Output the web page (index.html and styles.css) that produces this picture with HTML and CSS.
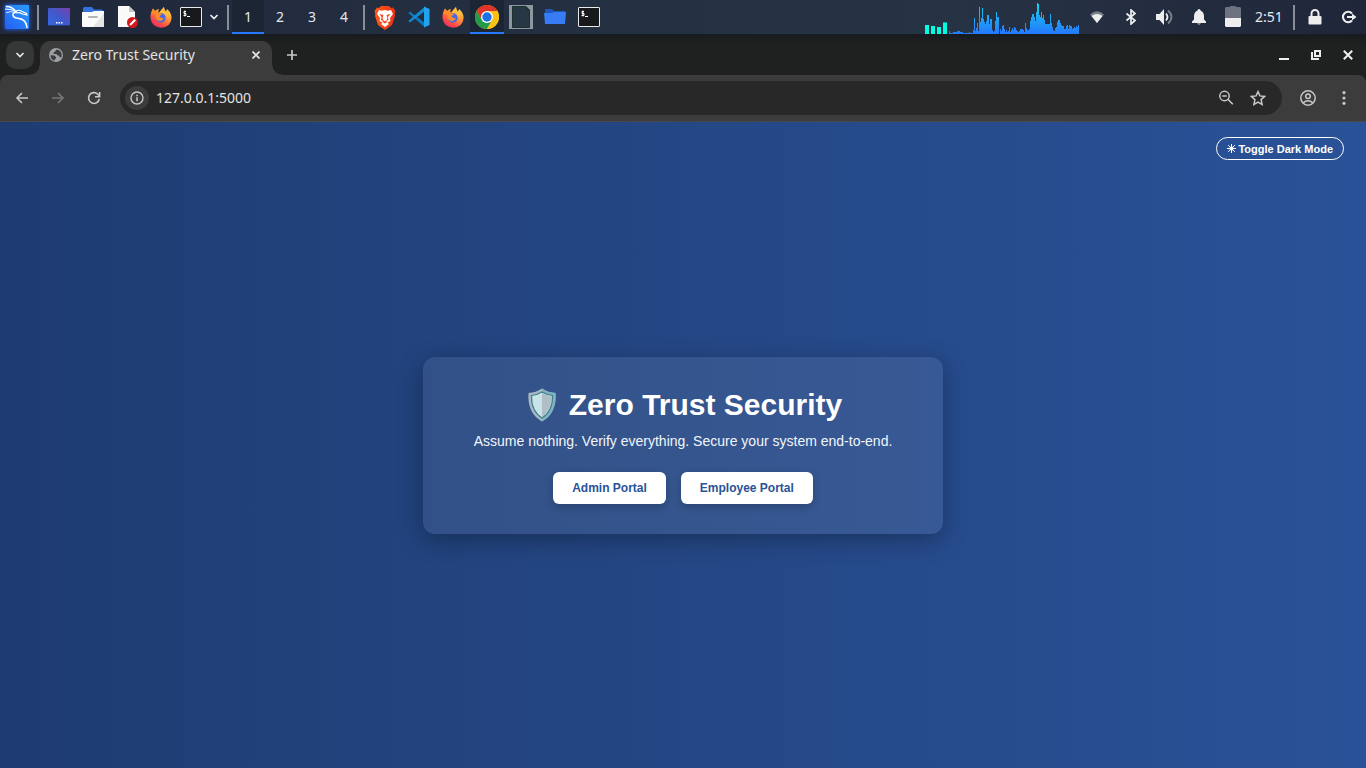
FILE: index.html
```html
<!DOCTYPE html>
<html lang="en">
<head>
<meta charset="utf-8">
<meta name="viewport" content="width=device-width, initial-scale=1">
<title>Zero Trust Security</title>
<link rel="stylesheet" href="styles.css">
</head>
<body>
<header class="panel">
  <button class="cell" aria-label="Applications">
    <svg class="kali" width="34" height="34" viewBox="0 0 34 34">
      <defs><linearGradient id="kg" x1="0" y1="1" x2="1" y2="0"><stop offset="0" stop-color="#2360f2"/><stop offset="1" stop-color="#2a9bff"/></linearGradient></defs>
      <rect x="5" y="5" width="24" height="24" rx="1" fill="url(#kg)"/>
      <g fill="none" stroke="#fff" stroke-linecap="round">
        <path d="M6.500 6.500Q12 6.500 16 11.500" stroke-width="1.300"/>
        <path d="M5.500 9Q11 8.500 16.500 12" stroke-width="1"/>
        <path d="M6.500 12.500Q11 10.500 15.500 12.500" stroke-width=".8"/>
        <path d="M15.500 11.500Q19 9 22 11.500L26.500 13.500L27 15L22.500 14Q19 12 17 13" stroke-width="1.200"/>
        <path d="M16.500 12C11 13 12 17.500 18 18.300C23.500 19 26.500 21.500 27 27.500" stroke-width="1.500"/>
        <path d="M20.500 18.700C24.500 20 25.500 22 26.500 25" stroke-width="1"/>
      </g>
    </svg>
  </button>
  <span class="sep"></span>
  <button class="cell" aria-label="Show desktop">
    <svg width="22" height="18" viewBox="0 0 22 18"><defs><linearGradient id="dg" x1="0" y1="1" x2="1" y2="0"><stop offset="0" stop-color="#3568df"/><stop offset=".5" stop-color="#4159cc"/><stop offset="1" stop-color="#7a3fae"/></linearGradient></defs><rect width="22" height="17" rx="1" fill="url(#dg)"/><path d="M0 17h22v1H0z" fill="#253c7c"/><path d="M8 14h1.500v1.500H8zM10.500 14H12v1.500h-1.500zM13 14h1.500v1.500H13z" fill="#fff"/></svg>
  </button>
  <button class="cell" aria-label="Files">
    <svg width="22" height="20" viewBox="0 0 22 20"><path d="M1 7V1.500Q1 0 2.500 0H10l2 2.500h7.500Q21 2.500 21 4v3z" fill="#3373df"/><path d="M0 5h10l2-1h10v15q0 1-1 1H1q-1 0-1-1z" fill="#fbfbfb"/><path d="M22 6v13q0 1-1 1H11z" fill="#e5e5e5"/><rect x="6" y="9" width="10" height="2" rx="1" fill="#b5b5b5"/></svg>
  </button>
  <button class="cell" aria-label="Text editor">
    <svg width="22" height="24" viewBox="0 0 22 24"><path d="M2 1h11l6 6v15H2z" fill="#fafafa"/><path d="M13 1v6h6z" fill="#c7c7c7"/><circle cx="16.500" cy="17.500" r="5.500" fill="#d5161b"/><path d="M13.500 20.500l.5-2 4.500-4.500 1.500 1.500-4.500 4.500z" fill="#fff"/></svg>
  </button>
  <button class="cell" aria-label="Firefox">
    <svg width="22" height="22" viewBox="0 0 22 22">
      <defs><linearGradient id="fg" x1=".9" y1="0" x2=".2" y2="1"><stop offset="0" stop-color="#ffe14d"/><stop offset=".4" stop-color="#ff9a35"/><stop offset=".75" stop-color="#ff4b45"/><stop offset="1" stop-color="#e5256d"/></linearGradient></defs>
      <g id="fox"><path d="M1 7L3 2.500 5 5Q6 3.500 9 3Q7.500 5 9 7Q11.500 3 14 1Q14 4 16 5.500L17 3Q22 7 21.500 12.500Q20.500 21.500 11 21.700Q1.500 21 .5 12Q.3 9 1 7z" fill="url(#fg)"/><path d="M5.500 8Q8 5.500 12 7Q16 8.500 15.500 13Q14.500 16.500 11 16.500Q6 16.500 6 11z" fill="#4369e8"/><path d="M1 7L3 2.500 5 5Q7 4.500 9 7Q12 7 12.500 8.500Q10 9 9.500 10.500Q11.500 13 14 12Q12.500 15.500 9 15Q5.500 14 5.500 9z" fill="#ff8a2c"/><path d="M9 7Q12 4 14 1Q14 4 17.500 7.500Q19 10 18 14Q17.500 8 12 7z" fill="#ffbe3c"/></g>
    </svg>
  </button>
  <button class="cell term" aria-label="Terminal">
    <svg width="22" height="20" viewBox="0 0 22 20"><g id="terminal"><rect x=".5" y=".5" width="21" height="19" rx=".5" fill="#17191a" stroke="#e9e9e9"/><path d="M6 4.500H4V6.500H6V8.500H3.500M4.900 3.500v6M7 9.500h3" fill="none" stroke="#fff"/></g></svg>
  </button>
  <button class="cell chev" aria-label="More terminals">
    <svg width="10" height="6" viewBox="0 0 10 6"><path d="M1.500 1L5 4.500 8.500 1" fill="none" stroke="#eee" stroke-width="1.700"/></svg>
  </button>
  <span class="sep"></span>
  <nav class="spaces" aria-label="Workspaces">
    <button class="space active">1</button><button class="space">2</button><button class="space">3</button><button class="space">4</button>
  </nav>
  <span class="sep"></span>
  <button class="cell" aria-label="Brave">
    <svg width="22" height="25" viewBox="0 0 22 25"><defs><linearGradient id="bg"><stop offset="0" stop-color="#ff5a16"/><stop offset="1" stop-color="#ed2f18"/></linearGradient></defs><path d="M7 1h8l2 2 2-.5L21.500 6l-.8 3 .3 2-3 9-7 5-7-5-3-9 .3-2L.5 6 3 2.500l2 .5z" fill="url(#bg)"/><path d="M5 5l3 .8 3-.8 3 .8 3-.8 2 4-3 4 .5 3-3 1.500L15 19l-4 3-4-3 1.500-1.500-3-1.500.5-3-3-4z" fill="#fff"/><path d="M5.500 9l4 1-1 3 1 2.500 1.500.8 1.500-.8 1-2.500-1-3 4-1-2.500 3 .5 3-2 1 .5 1L11 18.500 8.500 17l.5-1-2-1 .5-3z" fill="#f4471b"/><path d="M10 10h2l.8 3L12 15.500h-2L9.200 13z" fill="#fff"/></svg>
  </button>
  <button class="cell" aria-label="Visual Studio Code">
    <svg width="22" height="22" viewBox="0 0 22 22"><path d="M.3 7L2 5.500 17 17v4.500z" fill="#0a77bb"/><path d="M.3 15L2 16.500 17 5V.5z" fill="#148ad0"/><path d="M16 .5L21.500 3v16L16 21.500z" fill="#22a3ee"/></svg>
  </button>
  <button class="cell" aria-label="Firefox window">
    <svg width="22" height="22" viewBox="0 0 22 22"><use href="#fox"/></svg>
  </button>
  <button class="cell active" aria-label="Google Chrome">
    <svg width="24" height="24" viewBox="0 0 24 24"><circle cx="12" cy="12" r="12" fill="#fbc116"/><path d="M1.600 6A12 12 0 0 1 22.400 6H12L6.800 15z" fill="#df3428"/><path d="M1.600 6A12 12 0 0 0 12 24L17.200 15H6.800z" fill="#239a4a"/><path d="M22.400 6A12 12 0 0 1 12 24L17.200 15 12 6z" fill="#fbc116"/><circle cx="12" cy="12" r="6" fill="#fff"/><circle cx="12" cy="12" r="4.700" fill="#1b72e5"/></svg>
  </button>
  <button class="cell" aria-label="Document window">
    <svg width="24" height="24" viewBox="0 0 24 24"><path d="M0 0h24v24H0z" fill="#8e979f"/><path d="M3.500 1.500h12l5 5v16h-17z" fill="#273744" stroke="#1b302f"/><path d="M15 1l6 6V5l-4-4z" fill="#17382f"/></svg>
  </button>
  <button class="cell" aria-label="File manager window">
    <svg width="22" height="18" viewBox="0 0 22 18"><path d="M1 3V1.500Q1 1 2 1h6l2 2h10q1 0 1 1v5H1z" fill="#2157bd"/><path d="M0 5h8l2-1h12l-1 12H1z" fill="#377cf4"/></svg>
  </button>
  <button class="cell" aria-label="Terminal window">
    <svg width="22" height="20" viewBox="0 0 22 20"><use href="#terminal"/></svg>
  </button>

  <svg class="graph" width="154" height="34" viewBox="0 0 154 34" role="img" aria-label="System load">
    <defs><linearGradient id="lg" gradientUnits="userSpaceOnUse" x1="0" y1="0" x2="0" y2="34"><stop offset="0" stop-color="#00eef2"/><stop offset=".45" stop-color="#1cadf5"/><stop offset="1" stop-color="#2478ff"/></linearGradient></defs>
    <path d="M0 25h4v9H0zM6 26h4v8H6zM12 27h4v7h-4zM18 22h4v12h-4z" fill="#00ffe1"/><path d="M18 22h4v1h-4z" fill="#0aa99d"/>
    <path fill="url(#lg)" d="M24 34V31h1V33h3V32h4V31h3V32h3V33h6V32h1V33h3V30h1V18h1V31h1V28h1V23h1V31h1V7h1V22h1V18h1V8h1V19h1V22h1V24h1V21h1V15h2V24h1V19h2V30h1V32h1V31h1V21h1V12h1V17h2V34h1V29h1V31h1V26h1V25h1V29h1V32h1V30h1V32h1V31h1V27h1V32h1V30h1V28h1V30h1V27h1V28h1V30h1V31h1V32h1V31h1V29h3V30h1V32h1V23h1V28h1V30h2V29h1V21h1V17h1V14h2V17h1V21h1V12h1V3h1V4h1V15h1V17h1V12h1V18h1V15h1V20h1V24h5V14h1V23h1V27h1V30h1V31h1V28h1V27h1V22h1V20h2V23h1V25h1V26h2V29h2V26h1V25h1V29h1V25h1V26h2V29h1V28h1V27h1V28h1V26h1V27h1V25h2V34z"/>
  </svg>
  <button class="cell" aria-label="Wi-Fi"><svg width="16" height="14" viewBox="0 0 16 14"><path d="M1 4.500Q8-2 15 4.500L8 13z" fill="#777f88"/><path d="M2.500 6Q8 2 13.500 6L8 13z" fill="#eee"/></svg></button>
  <button class="cell" aria-label="Bluetooth"><svg width="12" height="16" viewBox="0 0 12 16"><path d="M1.500 4.500l8.500 7-4 3.500V1l4 3.500-8.500 7" fill="none" stroke="#eee" stroke-width="1.700"/></svg></button>
  <button class="cell" aria-label="Volume"><svg width="18" height="16" viewBox="0 0 18 16"><path d="M0 5h3.500L8 0v16l-4.500-5H0z" fill="#eee"/><path d="M10 4.500q3 3.500 0 7" fill="none" stroke="#eee" stroke-width="1.800"/><path d="M12 1.500q7 6.500 0 13" fill="none" stroke="#78808c" stroke-width="1.800"/></svg></button>
  <button class="cell" aria-label="Notifications"><svg width="14" height="16" viewBox="0 0 14 16"><path d="M7 0q1.500 0 1.500 1.500Q12 3 12 7v3.500l2 2V14H0v-1.500l2-2V7q0-4 3.500-5.500Q5.500 0 7 0zM5 14.500h4q-2 2-4 0z" fill="#eee"/></svg></button>
  <button class="cell" aria-label="Battery"><svg width="16" height="22" viewBox="0 0 16 22"><path d="M5 0h6v1h4l1 1v10H0V2l1-1h4z" fill="#6c727f"/><path d="M0 12h16v8l-1 1H1l-1-1z" fill="#eee"/></svg></button>
  <time class="clock">2:51</time>
  <span class="sep"></span>
  <button class="cell" aria-label="Lock screen"><svg width="14" height="16" viewBox="0 0 14 16"><path d="M3.500 8V4.500a3.500 3.500 0 0 1 7 0V8" fill="none" stroke="#eee" stroke-width="2"/><rect x=".5" y="7" width="13" height="8.500" rx="1" fill="#eee"/></svg></button>
  <button class="cell" aria-label="Log out"><svg width="16" height="14" viewBox="0 0 16 14"><path d="M11 3.500A5.200 5.200 0 1 0 11 10.500" fill="none" stroke="#eee" stroke-width="2.100"/><path d="M6 6h5V3.500L15.500 7 11 10.500V8H6z" fill="#eee"/></svg></button>
</header>

<section class="browser" aria-label="Browser">
  <div class="tabstrip">
    <button class="tabsearch" aria-label="Search tabs"><svg width="10" height="6" viewBox="0 0 10 6"><path d="M1.500 1L5 4.500 8.500 1" fill="none" stroke="#e3e3e3" stroke-width="1.700"/></svg></button>
    <div class="tab">
      <svg width="14" height="14" viewBox="0 0 14 14"><circle cx="7" cy="7" r="7" fill="#9aa0a6"/><path d="M1.500 7.200l3.800.3 1.900 1.700-.4 1.500-1 .3-.1 1.800Q1.600 11.400 1.500 7.200zM7.500 1.600L6 3.800 4.600 4.500v1.400h3l1 1.500h1.600l.6 2 1.600-.3Q13.500 5 10.500 2.400z" fill="#3c3c3c"/></svg>
      <span class="title">Zero Trust Security</span>
      <button class="close" aria-label="Close tab"><svg width="8" height="8" viewBox="0 0 8 8"><path d="M.5.5l7 7M7.500.5l-7 7" stroke="#e3e3e3" stroke-width="1.700"/></svg></button>
    </div>
    <button class="newtab" aria-label="New tab"><svg width="12" height="12" viewBox="0 0 12 12"><path d="M6 1v10M1 6h10" stroke="#c7c7c7" stroke-width="1.700"/></svg></button>
    <div class="controls">
      <button class="control" aria-label="Minimize"><svg width="10" height="10" viewBox="0 0 10 10"><path d="M0 8h10v2H0z" fill="#eee"/></svg></button>
      <button class="control" aria-label="Restore"><svg width="10" height="10" viewBox="0 0 10 10"><path d="M4 1h5v5H4zM1 2v7h7" fill="none" stroke="#eee" stroke-width="2"/></svg></button>
      <button class="control" aria-label="Close window"><svg width="10" height="10" viewBox="0 0 10 10"><path d="M.8.8l8.400 8.400M9.200.8L.8 9.200" stroke="#eee" stroke-width="2"/></svg></button>
    </div>
  </div>
  <div class="toolbar">
    <button class="tool" aria-label="Back"><svg width="14" height="12" viewBox="0 0 14 12"><path d="M13 6H2M7 1L2 6l5 5" fill="none" stroke="#c7c7c7" stroke-width="1.600"/></svg></button>
    <button class="tool" aria-label="Forward"><svg width="14" height="12" viewBox="0 0 14 12"><path d="M1 6h11M7 1l5 5-5 5" fill="none" stroke="#777" stroke-width="1.600"/></svg></button>
    <button class="tool" aria-label="Reload"><svg width="14" height="14" viewBox="0 0 14 14"><path d="M12.300 8A5.400 5.400 0 1 1 10.800 3.200L12.500 5M12.600 1v4.700H8" fill="none" stroke="#c7c7c7" stroke-width="1.600"/></svg></button>
    <div class="omnibox">
      <button class="info" aria-label="Site information"><svg width="14" height="14" viewBox="0 0 14 14"><circle cx="7" cy="7" r="6" fill="none" stroke="#c7c7c7" stroke-width="1.400"/><path d="M7 6.300v4M7 3.700v1.500" stroke="#c7c7c7" stroke-width="1.500"/></svg></button>
      <input class="url" type="text" value="127.0.0.1:5000" aria-label="Address">
      <button class="inbox" aria-label="Zoom"><svg width="16" height="16" viewBox="0 0 16 16"><circle cx="6.500" cy="6" r="4.700" fill="none" stroke="#c7c7c7" stroke-width="1.500"/><path d="M4.300 6h4.400M9.800 9.300l5 5" stroke="#c7c7c7" stroke-width="1.600"/></svg></button>
      <button class="inbox" aria-label="Bookmark"><svg width="16" height="16" viewBox="0 0 16 16"><path d="M8 1.600l1.900 4.300 4.800.5-3.600 3.200 1 4.800L8 12l-4.100 2.400 1-4.800L1.300 6.400l4.800-.5z" fill="none" stroke="#c7c7c7" stroke-width="1.500"/></svg></button>
    </div>
    <button class="tool" aria-label="Profile"><svg width="16" height="16" viewBox="0 0 16 16"><g fill="none" stroke="#c7c7c7" stroke-width="1.500"><circle cx="8" cy="8" r="7.200"/><circle cx="8" cy="6.200" r="2.300"/><path d="M3 13q5-4.500 10 0"/></g></svg></button>
    <button class="tool" aria-label="Menu"><svg width="4" height="14" viewBox="0 0 4 14"><g fill="#c7c7c7"><circle cx="2" cy="1.700" r="1.600"/><circle cx="2" cy="7" r="1.600"/><circle cx="2" cy="12.300" r="1.600"/></g></svg></button>
  </div>
</section>

<main class="page">
  <button class="toggle"><svg width="9" height="9" viewBox="0 0 9 9"><circle cx="4.500" cy="4.500" r="2" fill="#fff"/><path d="M4.500 0v9M0 4.500h9M1.200 1.200l6.600 6.600M7.800 1.200L1.200 7.800" stroke="#fff"/></svg>Toggle Dark Mode</button>
  <section class="card">
    <h1 class="heading">
      <svg width="36" height="34" viewBox="0 0 36 34"><path d="M18 .5Q24 4.500 31.500 5Q33 25 18 33.500Q3 25 4.500 5Q12 4.500 18 .5z" fill="#a9b9c0"/><path d="M18 .5Q24 4.500 31.500 5Q33 25 18 33.500z" fill="#82b1bf"/><path d="M18 4Q23 7 28.500 7.500Q29 23 18 30Q7 23 7.500 7.500Q13 7 18 4z" fill="#c9e4e9" stroke="#3d7f90" stroke-width="1.200"/><path d="M18 5Q23 8 27.500 8.300Q28 22 18 29z" fill="#b0bec5"/></svg>
      <span>Zero Trust Security</span>
    </h1>
    <p class="lead">Assume nothing. Verify everything. Secure your system end-to-end.</p>
    <div class="links"><a class="portal" href="#admin">Admin Portal</a><a class="portal" href="#employee">Employee Portal</a></div>
  </section>
</main>
</body>
</html>
```
FILE: styles.css
```css
* { box-sizing: border-box; }

body {
  margin: 0;
  min-height: 100vh;
  display: flex;
  flex-direction: column;
  font-family: "Noto Sans", sans-serif;
  font-size: 14px;
  background: #1f2020;
}

button {
  margin: 0;
  padding: 0;
  border: 0;
  background: none;
  color: inherit;
  font: inherit;
}

svg { display: block; flex: none; }

/* Desktop panel */
.panel {
  display: flex;
  height: 34px;
  color: #e6e8eb;
  background: linear-gradient(90deg, #20283b, #243142 45%, #263344 70%, #20263a);
}

.cell {
  width: 34px;
  display: flex;
  align-items: center;
  justify-content: center;
}

.kali { filter: drop-shadow(0 0 2px #2468ff); }
.term { width: 26px; }
.chev { width: 20px; }

.sep {
  width: 2px;
  margin: 5px 3px 4px;
  background: #888e96;
}

.spaces { display: flex; }
.space { width: 32px; padding-bottom: 2px; }

.active {
  background: #1b2533;
  box-shadow: inset 0 -2px #2777ff;
}

.graph { margin: 0 1px 0 auto; }

.clock {
  width: 40px;
  line-height: 34px;
  padding-left: 5px;
}

/* Browser frame */
.tabstrip {
  display: flex;
  height: 41px;
  padding: 7px 2px 0 6px;
  background: linear-gradient(#181b1e, #1f2120 25%, #1f2120);
}

.tabsearch {
  width: 28px;
  height: 28px;
  border-radius: 10px;
  background: #363737;
  display: flex;
  align-items: center;
  justify-content: center;
}

.tab {
  position: relative;
  width: 232px;
  margin-left: 6px;
  padding: 0 10px 6px 9px;
  display: flex;
  align-items: center;
  gap: 9px;
  border-radius: 10px 10px 0 0;
  background: #3c3c3c;
  color: #e3e3e3;
}

.tab::before,
.tab::after {
  content: "";
  position: absolute;
  bottom: 0;
  width: 10px;
  height: 10px;
}

.tab::before { right: 100%; background: radial-gradient(circle at 0 0, transparent 9px, #3c3c3c 10px); }
.tab::after { left: 100%; background: radial-gradient(circle at 100% 0, transparent 9px, #3c3c3c 10px); }

.title { flex: 1; padding-bottom: 2px; white-space: nowrap; }

.close {
  width: 12px;
  height: 12px;
  display: flex;
  align-items: center;
  justify-content: center;
}

.newtab {
  width: 28px;
  height: 28px;
  margin-left: 6px;
  display: flex;
  align-items: center;
  justify-content: center;
}

.controls { display: flex; margin-left: auto; }

.control {
  width: 32px;
  height: 28px;
  display: flex;
  align-items: center;
  justify-content: center;
}

.browser { background: #1f2120; }

.toolbar {
  display: flex;
  align-items: center;
  height: 47px;
  padding: 0 4px;
  border-radius: 8px 8px 0 0;
  border-bottom: 1px solid #4a4a4a;
  background: #3c3c3c;
}

.tool {
  width: 36px;
  height: 34px;
  display: flex;
  align-items: center;
  justify-content: center;
}

.omnibox {
  flex: 1;
  height: 34px;
  margin: 0 8px;
  padding: 0 8px 0 5px;
  display: flex;
  align-items: center;
  border-radius: 17px;
  background: #282828;
}

.info {
  width: 24px;
  height: 24px;
  border-radius: 12px;
  background: #3c3c3c;
  display: flex;
  align-items: center;
  justify-content: center;
}

.url {
  flex: 1;
  min-width: 0;
  margin-left: 7px;
  padding: 0 0 2px;
  border: 0;
  outline: 0;
  background: none;
  color: #e3e3e3;
  font: inherit;
}

.inbox {
  width: 32px;
  height: 32px;
  display: flex;
  align-items: center;
  justify-content: center;
}

/* Landing page */
.page {
  position: relative;
  flex: 1;
  display: flex;
  align-items: center;
  justify-content: center;
  font-family: "Liberation Sans", Arial, sans-serif;
  color: #fff;
  background: linear-gradient(to right, #1e3c72, #2a5298);
}

.toggle {
  position: absolute;
  top: 15px;
  right: 22px;
  height: 23px;
  padding: 0 10px;
  display: flex;
  align-items: center;
  gap: 2px;
  border: 1px solid #fff;
  border-radius: 12px;
  font-size: 11px;
  font-weight: bold;
}

.card {
  width: min(520px, 92%);
  padding: 31px 30px 30px;
  border-radius: 12px;
  text-align: center;
  background: rgba(255, 255, 255, 0.08);
  box-shadow: 0 6px 24px rgba(0, 0, 0, 0.3);
}

.heading {
  margin: 0 0 11px;
  display: flex;
  justify-content: center;
  gap: 9px;
  font-size: 30px;
  line-height: 34px;
}

.lead {
  margin: 0 0 22px;
  font-size: 14px;
  line-height: 17px;
  color: #f2f5fa;
}

.links {
  display: flex;
  justify-content: center;
  gap: 15px;
}

.portal {
  padding: 0 19px;
  border-radius: 6px;
  background: #fff;
  color: #2a5298;
  font-size: 12px;
  font-weight: bold;
  line-height: 32px;
  text-decoration: none;
  box-shadow: 0 3px 8px rgba(0, 0, 0, 0.2);
}
```
